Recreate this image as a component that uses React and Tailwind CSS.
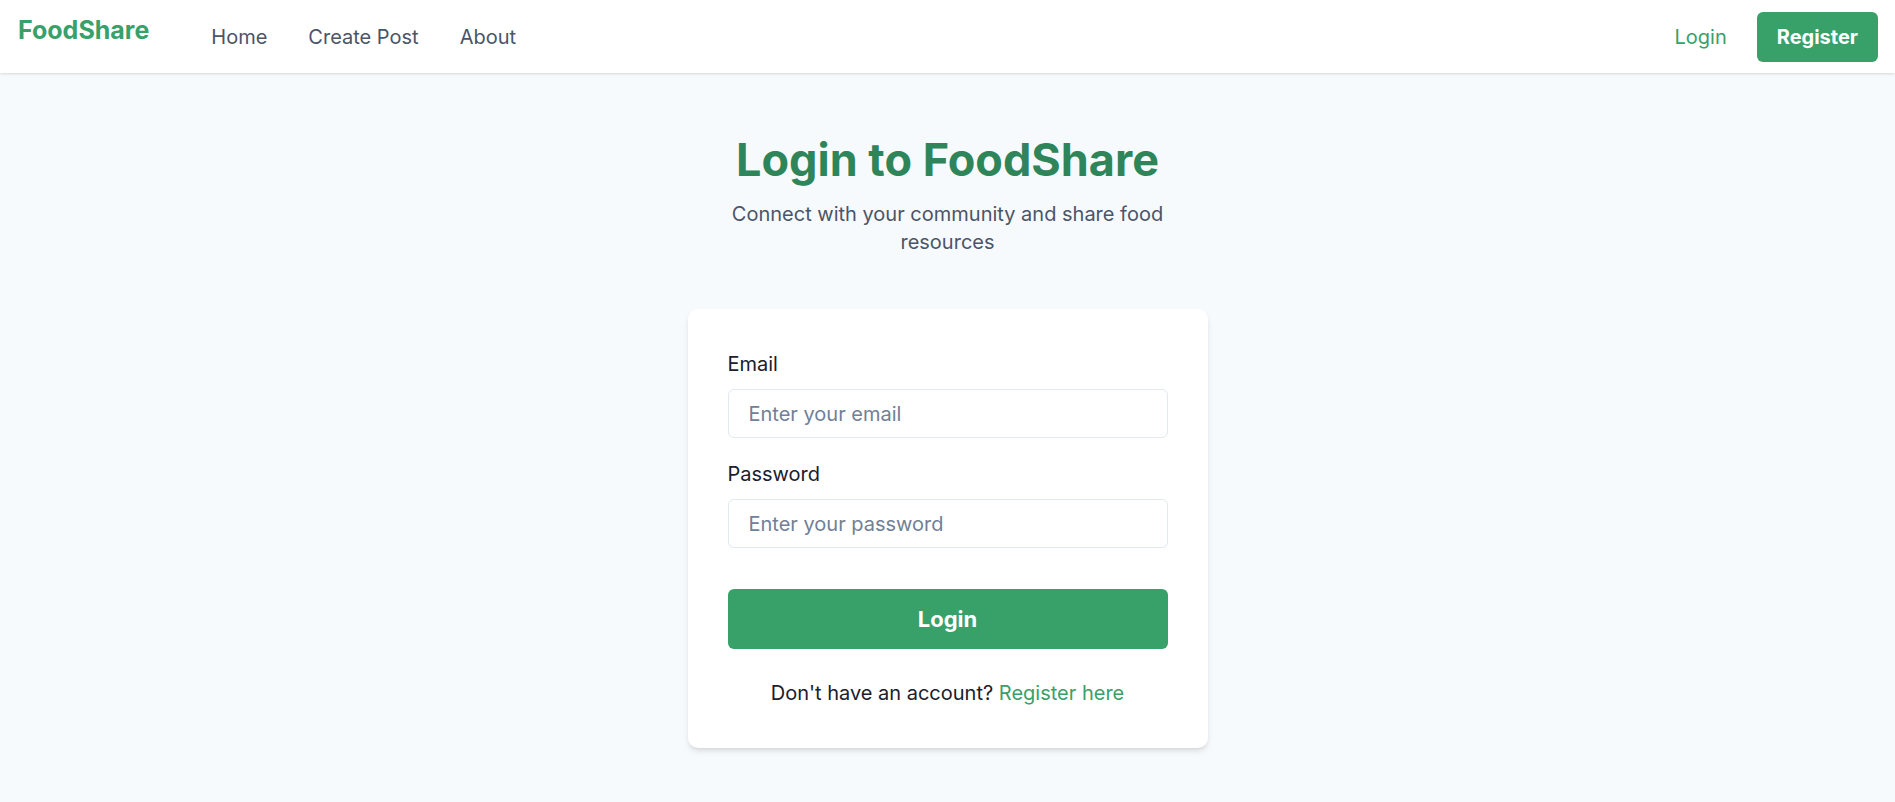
import { useState } from 'react';

const Navbar = () => {
  return (
    <nav className="flex items-center justify-between h-[73px] px-[17px] bg-white shadow-sm relative z-10">
      <div className="flex items-center">
        <a href="#" className="pl-[1px] mb-[13px] text-[25px] leading-[32px] font-bold text-[#38a169]">
          FoodShare
        </a>
        <div className="flex items-center gap-[41px] ml-[62px] text-[20px] leading-[30px] text-[#4a5568]">
          <a href="#">Home</a>
          <a href="#">Create Post</a>
          <a href="#">About</a>
        </div>
      </div>
      <div className="flex items-center gap-[30px]">
        <a href="#" className="text-[20px] leading-[30px] text-[#38a169]">Login</a>
        <a
          href="#"
          className="px-[20px] py-[10px] rounded-md bg-[#38a169] text-white text-[20px] leading-[30px] font-bold"
        >
          Register
        </a>
      </div>
    </nav>
  );
};

const LoginPage = () => {
  const [email, setEmail] = useState('');
  const [password, setPassword] = useState('');

  const handleSubmit = (e) => {
    e.preventDefault();
  };

  return (
    <main className="flex flex-col items-center pt-[60px]">
      <h1 className="text-[45px] leading-[54px] font-bold text-[#2f855a]">Login to FoodShare</h1>
      <p className="mt-[13px] max-w-[450px] text-center text-[20px] leading-[28px] text-[#4a5568]">
        Connect with your community and share food resources
      </p>

      <form
        onSubmit={handleSubmit}
        className="mt-[53px] w-[520px] p-10 bg-white rounded-[10px] shadow-md"
      >
        <label className="block text-[20px] leading-[30px] text-[#1a202c] mb-[10px]">Email</label>
        <input
          type="email"
          value={email}
          onChange={(e) => setEmail(e.target.value)}
          placeholder="Enter your email"
          className="block w-full h-[49px] px-5 text-[20px] text-[#1a202c] border border-[#e2e8f0] rounded-md placeholder:text-[#718096] outline-none"
        />

        <label className="block mt-[21px] text-[20px] leading-[30px] text-[#1a202c] mb-[10px]">Password</label>
        <input
          type="password"
          value={password}
          onChange={(e) => setPassword(e.target.value)}
          placeholder="Enter your password"
          className="block w-full h-[49px] px-5 text-[20px] text-[#1a202c] border border-[#e2e8f0] rounded-md placeholder:text-[#718096] outline-none"
        />

        <button
          type="submit"
          className="block w-full mt-[41px] h-[60px] rounded-md bg-[#38a169] text-white text-[22px] font-bold"
        >
          Login
        </button>

        <p className="mt-[29px] text-center text-[20px] leading-[30px] text-[#1a202c]">
          Don't have an account? <a href="#" className="text-[#38a169]">Register here</a>
        </p>
      </form>
    </main>
  );
};

export default function App() {
  return (
    <div className="min-h-screen bg-[#f7fafc] font-['Inter',sans-serif]">
      <Navbar />
      <LoginPage />
    </div>
  );
}
